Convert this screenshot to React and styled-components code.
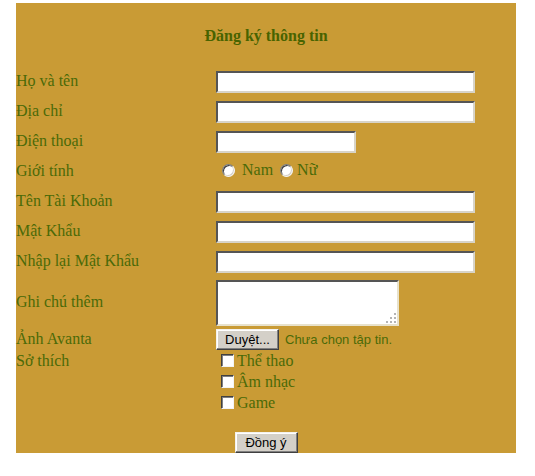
import React from "react";
import styled, { createGlobalStyle } from "styled-components";

const Global = createGlobalStyle`
  html, body { margin: 0; padding: 0; background: #ffffff; }
  body { font-family: "Liberation Serif", "Times New Roman", serif; }
`;

const GOLD = "#c99b35";
const OLIVE = "#4b6a08";

const Panel = styled.div`
  width: 500px;
  height: 450px;
  margin: 3px 0 0 16px;
  background: ${GOLD};
  padding-top: 23px;
  box-sizing: border-box;
  display: flex;
  flex-direction: column;
`;

const Title = styled.h1`
  margin: 0 0 21px;
  font: bold 16px/20px "Liberation Serif", "Times New Roman", serif;
  color: #486300;
  text-align: center;
`;

const Row = styled.div`
  display: grid;
  grid-template-columns: 200px 1fr;
  align-items: ${(p) => (p.$top ? "start" : "center")};
  height: ${(p) => p.$h}px;
`;

const Label = styled.div`
  font-size: 16px;
  line-height: ${(p) => p.$lh || 20}px;
  color: ${OLIVE};
  white-space: nowrap;
  margin-top: ${(p) => (p.$top ? 0 : -2)}px;
`;

const TextInput = styled.input`
  box-sizing: border-box;
  width: ${(p) => p.$w}px;
  height: 22px;
  margin: 0;
  padding: 1px 2px;
  background: #fff;
  border: 2px solid;
  border-color: #555555 #d8d4c8 #d8d4c8 #555555;
  outline: none;
  font: 13px "Liberation Sans", Arial, sans-serif;
`;

const AreaWrap = styled.div`
  position: relative;
  width: 183px;
  height: 46px;
`;

const Area = styled.textarea`
  box-sizing: border-box;
  display: block;
  width: 183px;
  height: 46px;
  margin: 0;
  padding: 2px;
  resize: none;
  background: #fff;
  border: 2px solid;
  border-color: #555555 #e8e2cc #e8e2cc #555555;
  outline: none;
  font: 13px "Liberation Sans", Arial, sans-serif;
`;

const Grip = styled.svg`
  position: absolute;
  right: 3px;
  bottom: 3px;
  pointer-events: none;
`;

const Inline = styled.div`
  display: flex;
  align-items: center;
  padding-left: ${(p) => p.$pl || 0}px;
  margin-top: ${(p) => p.$mt || 0}px;
`;

const RadioDot = styled.span`
  box-sizing: border-box;
  width: 13px;
  height: 13px;
  border-radius: 50%;
  background: #ffffff;
  border: 1px solid;
  border-color: #7c7c7c #f4f4f4 #f4f4f4 #7c7c7c;
  box-shadow: inset 1px 1px 0 #3c3c3c, inset -1px -1px 0 #d4d0c8;
  margin-left: ${(p) => p.$ml || 0}px;
  flex: none;
`;

const OptText = styled.span`
  font-size: 16px;
  line-height: 20px;
  color: ${OLIVE};
  margin-left: ${(p) => p.$ml || 0}px;
`;

const Btn = styled.button`
  box-sizing: border-box;
  width: 63px;
  height: 21px;
  margin: 0;
  padding: 0;
  background: #d4d0c8;
  border: 1px solid;
  border-color: #f4f2ee #404040 #404040 #f4f2ee;
  box-shadow: inset -1px -1px 0 #808080, inset 1px 1px 0 #ffffff;
  font: 13px/17px "Liberation Sans", Arial, sans-serif;
  color: #000;
  cursor: default;
`;

const FileNote = styled.span`
  font: 13px "Liberation Sans", Arial, sans-serif;
  color: ${OLIVE};
  margin-left: 6px;
`;

const CheckList = styled.div`
  display: flex;
  flex-direction: column;
  padding-left: 5px;
`;

const CheckLine = styled.label`
  display: flex;
  align-items: center;
  height: 21px;
`;

const Box = styled.span`
  box-sizing: border-box;
  width: 13px;
  height: 13px;
  background: #fff;
  border: 1px solid;
  border-color: #404040 #f4f4f4 #f4f4f4 #404040;
  box-shadow: inset 1px 1px 0 #808080;
  flex: none;
`;

const Submit = styled.div`
  display: flex;
  justify-content: center;
  margin-top: 19px;
`;

const fields = [
  { label: "Họ và tên", w: 259 },
  { label: "Địa chỉ", w: 259 },
  { label: "Điện thoại", w: 140 },
  { label: "Giới tính", radio: true },
  { label: "Tên Tài Khoản", w: 259 },
  { label: "Mật Khẩu", w: 259 },
  { label: "Nhập lại Mật Khẩu", w: 259 },
];

export default function App() {
  return (
    <>
      <Global />
      <Panel>
        <Title>Đăng ký thông tin</Title>
        {fields.map((f) => (
          <Row key={f.label} $h={30}>
            <Label>{f.label}</Label>
            {f.radio ? (
              <Inline $pl={6} $mt={-4}>
                <RadioDot />
                <OptText $ml={7}>Nam</OptText>
                <RadioDot $ml={7} />
                <OptText $ml={4}>Nữ</OptText>
              </Inline>
            ) : (
              <TextInput $w={f.w} />
            )}
          </Row>
        ))}
        <Row $h={52}>
          <Label>Ghi chú thêm</Label>
          <AreaWrap>
            <Area />
            <Grip width="10" height="10" viewBox="0 0 10 10">
              {[
                [8, 0],
                [4, 4],
                [8, 4],
                [0, 8],
                [4, 8],
                [8, 8],
              ].map(([x, y]) => (
                <rect key={`${x}-${y}`} x={x} y={y} width="2" height="2" fill="#b4b4b4" />
              ))}
            </Grip>
          </AreaWrap>
        </Row>
        <Row $h={21}>
          <Label>Ảnh Avanta</Label>
          <Inline>
            <Btn type="button">Duyệt...</Btn>
            <FileNote>Chưa chọn tập tin.</FileNote>
          </Inline>
        </Row>
        <Row $h={63} $top>
          <Label $lh={21} $top>Sở thích</Label>
          <CheckList>
            {["Thể thao", "Âm nhạc", "Game"].map((t) => (
              <CheckLine key={t}>
                <Box />
                <OptText $ml={3}>{t}</OptText>
              </CheckLine>
            ))}
          </CheckList>
        </Row>
        <Submit>
          <Btn type="button">Đồng ý</Btn>
        </Submit>
      </Panel>
    </>
  );
}
